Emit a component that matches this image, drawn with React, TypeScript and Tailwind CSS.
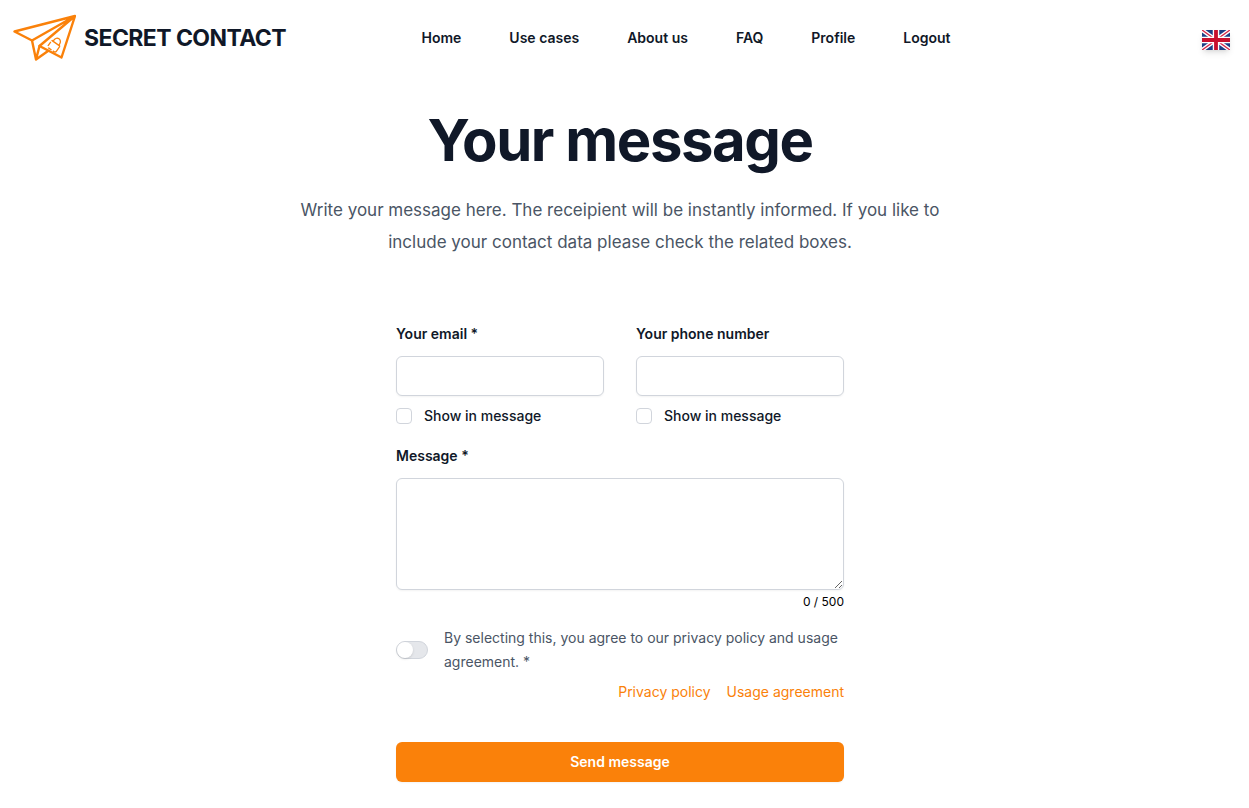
import { useState } from 'react';
import { clsx } from 'clsx';

const navigation = [
  { name: 'Home', href: '#home' },
  { name: 'Use cases', href: '#use-cases' },
  { name: 'About us', href: '#about' },
  { name: 'FAQ', href: '#faq' },
  { name: 'Profile', href: '#profile' },
  { name: 'Logout', href: '#logout' },
];

const MAX_LENGTH = 500;

const fieldClass =
  'block w-full rounded-md border border-gray-300 bg-white px-3 text-sm leading-6 text-gray-900 shadow-xs focus:outline-2 focus:outline-[#fa810a]';

export default function App() {
  return (
    <div className="min-h-screen bg-white pr-[9px] font-['Inter',sans-serif] text-gray-900">
      <Header />
      <main className="px-6 pt-[34px] pb-6">
        <div className="mx-auto max-w-2xl text-center">
          <h1 className="text-[58px] leading-[60px] font-bold tracking-tight">Your message</h1>
          <p className="mt-6 text-[17px] leading-8 text-gray-600">
            Write your message here. The receipient will be instantly informed. If you like to include your
            contact data please check the related boxes.
          </p>
        </div>
        <MessageForm />
      </main>
    </div>
  );
}

function Header() {
  return (
    <header className="flex h-[76px] items-center justify-between pr-[10px] pl-3">
      <a href="#home" className="flex items-center gap-2">
        <PlaneLogo className="h-12 w-16" />
        <span className="text-[23px] leading-8 font-bold tracking-tight">SECRET CONTACT</span>
      </a>
      <nav className="flex gap-12">
        {navigation.map((item) => (
          <a key={item.name} href={item.href} className="text-sm leading-6 font-semibold">
            {item.name}
          </a>
        ))}
      </nav>
      <div className="flex w-36 justify-end pt-1">
        <button type="button" aria-label="Change language" className="shadow-md">
          <FlagGB className="h-5 w-7" />
        </button>
      </div>
    </header>
  );
}

function MessageForm() {
  const [message, setMessage] = useState('');
  const [agreed, setAgreed] = useState(false);

  return (
    <form className="mx-auto mt-16 max-w-md" onSubmit={(e) => e.preventDefault()}>
      <div className="grid grid-cols-2 gap-x-8">
        <ContactField id="email" type="email" label="Your email *" />
        <ContactField id="phone" type="tel" label="Your phone number" />
      </div>

      <label htmlFor="message" className="mt-4 block text-sm leading-6 font-semibold">
        Message *
      </label>
      <textarea
        id="message"
        rows={4}
        maxLength={MAX_LENGTH}
        value={message}
        onChange={(e) => setMessage(e.target.value)}
        className={clsx(fieldClass, 'mt-[10px] h-28 resize-y py-2')}
      />
      <div className="mt-1 text-right text-xs text-black">
        {message.length} / {MAX_LENGTH}
      </div>

      <div className="mt-4 flex items-center gap-4">
        <input
          id="agree"
          type="checkbox"
          role="switch"
          checked={agreed}
          onChange={(e) => setAgreed(e.target.checked)}
          className="flex h-[18px] w-8 shrink-0 cursor-pointer appearance-none items-center rounded-full border border-gray-300 bg-gray-200 before:size-4 before:rounded-full before:bg-white before:shadow-sm before:transition checked:border-[#fa810a] checked:bg-[#fa810a] checked:before:translate-x-3.5"
        />
        <label htmlFor="agree" className="text-sm leading-6 text-gray-600">
          By selecting this, you agree to our privacy policy and usage agreement. *
        </label>
      </div>
      <div className="mt-[6px] flex justify-end gap-4 text-sm leading-6 text-[#fa810a]">
        <a href="#privacy">Privacy policy</a>
        <a href="#usage">Usage agreement</a>
      </div>

      <button
        type="submit"
        className="mt-[38px] block h-10 w-full rounded-md bg-[#fa810a] text-center text-sm font-semibold text-white shadow-xs"
      >
        Send message
      </button>
    </form>
  );
}

function ContactField({ id, type, label }: { id: string; type: string; label: string }) {
  return (
    <div>
      <label htmlFor={id} className="block text-sm leading-6 font-semibold">
        {label}
      </label>
      <input id={id} type={type} className={clsx(fieldClass, 'mt-[10px] h-10')} />
      <div className="mt-2 flex items-center gap-3">
        <input
          id={`${id}-show`}
          type="checkbox"
          className="size-4 appearance-none rounded-sm border border-gray-300 bg-white checked:border-[#fa810a] checked:bg-[#fa810a]"
        />
        <label htmlFor={`${id}-show`} className="text-sm leading-6 font-medium">
          Show in message
        </label>
      </div>
    </div>
  );
}

function PlaneLogo({ className }: { className?: string }) {
  return (
    <svg viewBox="12 14 64 48" className={className} fill="none" stroke="#fa810a" strokeWidth="2.4" strokeLinejoin="round" strokeLinecap="round" aria-hidden="true">
      <path d="M14.5 31.5 75 16 61.5 57.5 39.5 46 75 16 32 40.5 14.5 31.5" />
      <path d="M32 40.5 36 59.5 39.5 46M36 59.5 48 51" />
      {/* lock */}
      <g transform="rotate(35 55 44.5)" strokeWidth="1.3" strokeLinecap="butt">
        <path d="M50 43h10M60 43v6q0 2-2 2h-6q-2 0-2-2v-6" strokeDasharray="10 1.5 4 1.5 5 1.5" />
        <path d="M51.500 43v-1.500a3.500 4 0 0 1 7 0v1.500" />
      </g>
    </svg>
  );
}

function FlagGB({ className }: { className?: string }) {
  return (
    <svg viewBox="0 0 28 20" className={className} aria-hidden="true">
      <path fill="#1d3f85" d="M0 0h28v20H0z" />
      <path stroke="#fff" strokeWidth="4" d="m0 0 28 20M28 0 0 20" />
      <path stroke="#d6294a" strokeWidth="1.4" d="m0 0 28 20M28 0 0 20" />
      <path stroke="#fff" strokeWidth="6.500" d="M14 0v20M0 10h28" />
      <path stroke="#c8102e" strokeWidth="3.800" d="M14 0v20M0 10h28" />
    </svg>
  );
}
